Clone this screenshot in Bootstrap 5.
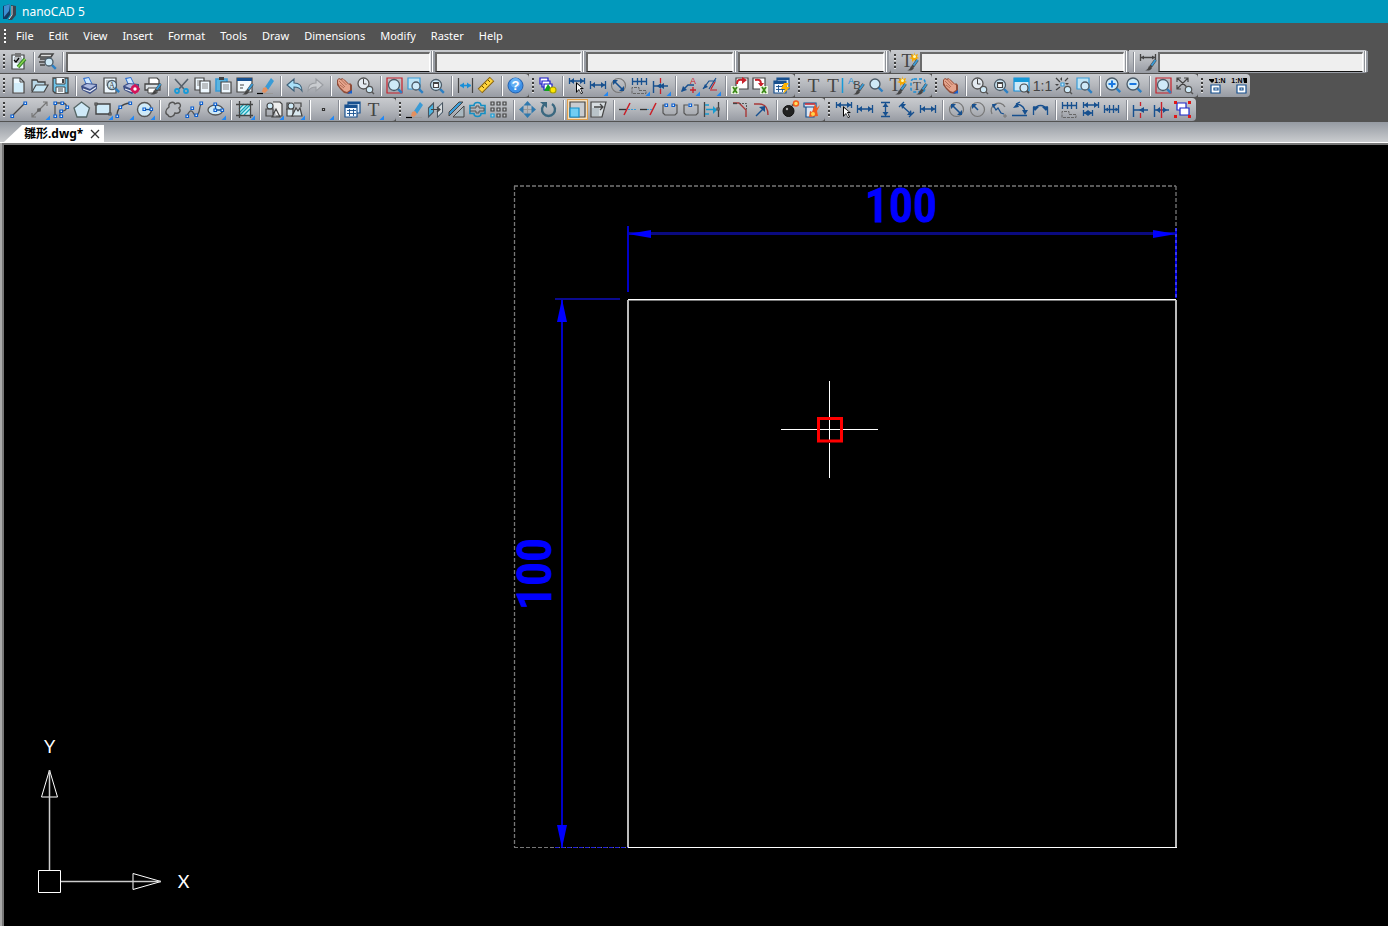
<!DOCTYPE html>
<html lang="en">
<head>
<meta charset="utf-8">
<meta name="viewport" content="width=device-width, initial-scale=1">
<title>nanoCAD 5</title>
<link href="https://cdn.jsdelivr.net/npm/bootstrap@5.3.0/dist/css/bootstrap.min.css" rel="stylesheet">
<style>
body{background:#535353;font-family:"Noto Sans","Noto Sans CJK JP",sans-serif;font-size:12px;line-height:16px}
.titlebar{background:#0099bc;height:23px;color:#fff;padding-left:2px;gap:5px}
.menubar{height:27px;padding:0 0 2px 4px}
.menubar .nav{padding-left:2px}
.menubar .nav-link{color:#fff;font-size:11px;padding:0 7px 0 8px}
.menu-grip{width:2px;height:14px;background:repeating-linear-gradient(#fff 0 2px,transparent 2px 4px)}
.strip{height:24px}
.toolbar{height:23px;padding:1px 3px 1px 0;background:linear-gradient(#c9cbcf,#b4b7bc 50%,#979ba3);border-radius:0 4px 4px 0}
.toolbar.roomy{padding-right:12px}
.toolbar.flush{padding-right:0}
.toolbar.tight{padding-right:2px}
.grip{width:8px;height:21px;flex:none;background:repeating-linear-gradient(#3c3c3c 0 2px,#e4e4e4 2px 3px,transparent 3px 4px) 3px 3px/2px 15px no-repeat}
.divider{width:8px;height:20px;flex:none;background:linear-gradient(#fff,#fff) 5px 0/1px 100% no-repeat,linear-gradient(#888c94,#888c94) 4px 0/1px 100% no-repeat}
.tool{width:21px;height:21px;padding:0;border:0;border-radius:0;flex:none;line-height:0;background:none}
.tool.wide{width:22px}
.tool svg{width:21px;height:21px}
.tool.on{background:#f3dfc0;box-shadow:inset 0 0 0 1px #e0a04c}
.combo{height:20px;min-width:0;padding:0;border:solid;border-width:2px 1px 1px 2px;border-color:#6a6a6a #fff #111 #6a6a6a;border-radius:0;background:#efefef;margin-top:1px}
.combo-lg{flex:366 1 0}
.combo-sm{flex:145 1 0}
.combo-md{flex:206 1 0}
.knob{width:5px;height:21px;flex:none;background:linear-gradient(90deg,#e2e3e5 0 1px,#8f9399 1px 2px,#fff 2px 3px,#999da4 3px)}
.fields{padding-right:20px}
.tabs{height:21px;background:linear-gradient(#959aa2,#cacccf);border-bottom:1px solid #fff}
.doc-tab{margin-left:4px;height:17px;padding:0 4px 0 20px;background:#fff;clip-path:polygon(18px 0,100% 0,100% 100%,0 100%);font-weight:700;font-size:12px;gap:7px}
.doc-tab a{color:#000;text-decoration:none}
.doc-tab button{width:10px;height:10px;padding:0;border:0;background:none;line-height:0}
.model{background:#000;border-top:2px solid #777;border-left:4px solid #999;border-image:linear-gradient(90deg,#aaa 0 2px,#777 2px) 2 0 0 4;min-height:300px}
.ucs{left:0;bottom:0;width:210px;height:200px}
</style>
</head>
<body class="d-flex flex-column min-vh-100">
<header>
  <div class="titlebar d-flex align-items-center">
    <svg width="15" height="18" aria-hidden="true"><path d="M1 3l7-2v11l-3 4H1z" fill="#123b63"/><path d="M2 3l6-2-1 7-5 6z" fill="#3d8fd0"/><path d="M9 2l5 1v9l-4 5H6l3-4z" fill="#39434e"/><path d="M10 3v9l-3 4" stroke="#d4dce2" fill="none"/></svg>
    <span>nanoCAD 5</span>
  </div>
  <div class="menubar d-flex align-items-center">
    <span class="menu-grip"></span>
    <nav class="nav" aria-label="Main menu">
      <a class="nav-link" href="#">File</a><a class="nav-link" href="#">Edit</a><a class="nav-link" href="#">View</a><a class="nav-link" href="#">Insert</a><a class="nav-link" href="#">Format</a><a class="nav-link" href="#">Tools</a><a class="nav-link" href="#">Draw</a><a class="nav-link" href="#">Dimensions</a><a class="nav-link" href="#">Modify</a><a class="nav-link" href="#">Raster</a><a class="nav-link" href="#">Help</a>
    </nav>
  </div>
  <div class="strip fields d-flex" id="fields"></div>
  <div class="strip d-flex" id="standard"></div>
  <div class="strip d-flex" id="drafting"></div>
</header>
<div class="tabs d-flex align-items-end">
  <div class="doc-tab d-flex align-items-center">
    <a href="#">雛形.dwg*</a>
    <button aria-label="Close document"><svg width="10" height="10"><path d="M1 1l8 8M9 1l-8 8" stroke="#333" stroke-width="1.3"/></svg></button>
  </div>
</div>
<main class="model d-flex flex-grow-1 position-relative overflow-hidden">
  <svg class="w-100" role="img" aria-label="Square with dimensions">
    <g transform="translate(-4 -145)">
      <g fill="none" stroke="#777" stroke-dasharray="4 2">
        <path d="M514 186H1176M514.500 186V847M1176 186V299" stroke-width="1.300"/>
        <path d="M514 847.500H628"/>
      </g>
      <g fill="#00f">
        <path d="M628 232h548v3H628z" fill="#0a0a80"/>
        <path d="M627 226h2v66h-2zM561 300h2v547h-2z" fill="#0000c8"/>
        <path d="M555 298h65v2h-65z" fill="#0a0a90"/>
        <path d="M1176 228V298" stroke="#00d" stroke-width="2"/>
        <path d="M1176 228V298" stroke="#77f" stroke-width="1" stroke-dasharray="3 3"/>
        <path d="M555 847.500h73" stroke="#22d" stroke-dasharray="4 2"/>
        <path d="M628 234l23-4v8zM1176 234l-23-4v8zM562 299l-5 23h10zM562 848l-5-23h10z"/>
      </g>
      <g fill="#00f" stroke="#00f" font-family="Roboto Condensed, Roboto, sans-serif" font-size="48" font-weight="500" text-anchor="middle">
        <text x="901" y="222">100</text>
        <text transform="translate(551 574) rotate(-90)">100</text>
      </g>
      <path d="M628 299h548v1H628zM628 847h549v1H628z" fill="#fff"/>
      <path d="M628 300h548v1H628z" fill="#777"/>
      <path d="M627 300h2v547h-2zM1175 300h2v547h-2z" fill="#bbb"/>
      <path d="M781 429.500h36M843 429.500h35M829.500 381v36M829.500 443v35M820 429.500h20M829.500 420v20" stroke="#fff"/>
      <path d="M818.500 418.500h23v22.500h-23z" fill="none" stroke="#f00" stroke-width="3"/>
    </g>
  </svg>
  <svg class="ucs position-absolute" role="img" aria-label="Coordinate axes">
    <g transform="translate(-4 -726)" fill="none" stroke="#fff">
      <path d="M38.500 870.500h22v22h-22zM49.500 770l-8 27h16zM161 881.500l-28-8v16z"/>
      <path d="M49.500 870V770M61 881.500h100" stroke="#ccc" stroke-width="1.500"/>
      <g fill="#fff" stroke="none" font-family="Lato" font-size="18" text-anchor="middle"><text x="49.500" y="753">Y</text><text x="183.500" y="888">X</text></g>
    </g>
  </svg>
</main>
<script src="https://cdn.jsdelivr.net/npm/bootstrap@5.3.0/dist/js/bootstrap.bundle.min.js"></script>
<script>
// Drawing helpers; every icon lives on a 21 x 21 grid.
const K = '#444', B = '#17508f', S = '#3a9bd6', L = '#cfeaf8', D = '#c8202a';
const p = (d, s = K, w = 1.3, f = 'none') => `<path d="${d}" stroke="${s}" stroke-width="${w}" fill="${f}"/>`;
const f = (d, c) => `<path d="${d}" fill="${c}"/>`;
const c = (x, y, r, s = K, w = 1.3, fl = 'none') => `<circle cx="${x}" cy="${y}" r="${r}" stroke="${s}" stroke-width="${w}" fill="${fl}"/>`;
const box = (x, y, w, h, s = K, fl = 'none') => p(`M${x} ${y}h${w}v${h}h-${w}z`, s, 1.2, fl);
const node = (...a) => a.map(([x, y]) => box(x - 1, y - 1, 2.5, 2.5, '#0b5fd0', '#fff')).join('');
const pt = (...a) => a.map(([x, y]) => box(x - 1, y - 1, 2, 2, K, '#ddd')).join('');
const lens = (x, y, r, inner = '') => p(`M${x + r * .7} ${y + r * .7}l4 4`, '#2b7fc4', 2.4) + c(x, y, r, '#4b5a66', 1.3, L) + inner;
const mini = c(14.5, 14.5, 3.2, '#555', 1.2, L) + p('M17 17l2 2', '#555', 1.4);
const brush = f('M8 19c3 0 3-2 4-4l3 2c-2 3-4 3-7 2z', K) + p('M13.500 16l5-7', K, 3) + p('M14.500 14.500l4-5.500', S, 2);
const txt = (t, x, y, s, col = K, ff = 'Liberation Serif', wt = 400) => `<text x="${x}" y="${y}" font-family="${ff}" font-size="${s}" font-weight="${wt}" fill="${col}" text-anchor="middle">${t}</text>`;
const star = f('M15 1l1 3 3-1-1 3 2 1-3 1 1 3-3-2-2 2v-3l-3-1 3-1-1-3 3 1z', '#f5a800') + c(15.5, 5.5, 1.5, 'none', 0, '#fffbb0');
const fly = f('M21 16.500v4.500h-4.500z', '#2288f5');
const ah = (x, y, dx) => f(`M${x} ${y}l${dx * 4}-3v6z`, B);
const dimH = (y, a = 3, b = 18, h = 4) => p(`M${a}.5 ${y - h}v${h * 2}M${b}.5 ${y - h}v${h * 2}M${a} ${y}h${b - a}`, B, 1.3) + ah(a + 1, y, 1) + ah(b, y, -1);
const ladder = p('M3.500 3v7M8.500 3v7M12.500 3v7M17.500 3v7M3 6.500h15', B, 1.3) + `<path d="M3 18.500v-6h7v3h7v3z" fill="none" stroke="#666" stroke-dasharray="3 1"/>`;
const cursor = f('M10 7v11l3-3 2 4 2-1-2-4h3z', '#000') + f('M11 9v7l2-2 2 4h1l-2-5h2z', '#fff');
const page = (x, y, w, h) => box(x, y, w, h, K, '#eef8ff') + p(`M${x + 2} ${y + 3}h${w - 4}M${x + 2} ${y + 5}h${w - 4}M${x + 2} ${y + 7}h${w - 4}`, '#888', 1);
const printer = f('M4 3l6-1 4 8-6 2z', '#2f6fd0') + f('M5.500 4l4-1 3 6-4 2z', '#cfe8ff') + f('M2 11l5-3 11 1v5l-7 5-8-4z', '#3d4f86') + f('M4 11l4-2 9 1-6 4z', '#aebbe0') + p('M4 14l7 2.500 6-4', '#e8eef8', 1.2);
const hand = f('M3 5l2-2 2 1 1-1 3 2 4 4 1-1 2 2v6l-3 3-5-1-4-4-3-4z', '#8f4c38') + f('M4 5l1-1 2 1 2-1 5 5 2 1v5l-3 2-3-1-4-4-2-4z', '#e5a48c') + p('M5 6l6 6M7.500 5l5 5M6 10l4 3', '#a35f4a', .8) + f('M13 18.500l5-3.500v3.500z', '#1560d0');
const clock = c(8.5, 8.500, 5.500, '#555', 1.3, '#e4eaf0') + p('M8.500 4v5h3', K, 1);
const excel = f('M2 11h8v8H2z', '#e8f4dd') + p('M4 12l4 6M8 12l-4 6', '#3c8a18', 1.8);
const eraser = f('M10 12l6-9 3 3-6 9z', S) + f('M8 13l3-1 2 3-3 3-3-1z', '#e29060') + p('M2 18.500h6', '#000', 1.2) + p('M8 18.500h10', '#999', 1);
const redframe = box(3, 3, 15, 15, D);
const tables = box(6, 3, 12, 11, B, '#dbe9f6') + box(3, 6, 12, 12, B, '#f4f9ff') + f('M3 6h12v3H3zM6 3h12v2H6z', B) + p('M5 11.500h9M5 14.500h9M7.500 10v7M11.500 10v7', B, .9);
const block = p('M10 3h7l2 2v12h-6', K, 1.2, '#eee') + c(7, 7, 3, K, 1.1, L) + p('M9 18l4-8 4 8zM3 10h7v7H3z', K, 1.2);

const icons = {
  props: page(4, 4, 12, 14) + f('M7 2h6v4H7z', '#777') + p('M6 9l2 2 3-4', '#000', 1.3) + p('M10 16l7-8', '#36852c', 3.6) + p('M10 16l7-8', '#8cd84c', 1.3),
  quick: p('M4 3h12l-2 3H2zM3 8h11M2 11h7M3 14h5', K, 1.5, '#e0e0e0') + lens(12, 11, 4),
  tstyle: txt('T', 8, 16, 18) + star + brush,
  dstyle: p('M3.500 3v7M18.500 3v7M3 6.500h15', K, 1.3) + f('M4 6.500l3-2v4zM18 6.500l-3-2v4z', K) + brush,
  new: p('M5 3h7l4 4v11H5z', K, 1.2, '#eef9ff') + p('M12 3v4h4', K, 1) + f('M6 8h9v9H6z', '#d2edfa'),
  open: p('M3 16V5h5l1 2h7v3', K, 1.3, '#b9d8e8') + p('M3 17l4-7h12l-4 7z', K, 1.2, '#c8e8f7'),
  save: p('M3 3h15v15H5l-2-2z', K, 1.3, '#6ec3e8') + f('M6 3h9v6H6zM6 12h9v6H6z', '#f4fbff') + p('M6 3v6h9V3M6 18v-6h9v6M8 14h5M8 16h5', K, 1) + f('M12 4h2v4h-2z', K),
  print: printer, preview: page(4, 3, 12, 15) + lens(12, 10, 4.500, txt('A', 12, 13, 8)), plot: printer + c(14, 14, 3, '#d2145a', 2.6, '#fff') + p('M14 9v2M14 17v2M9 14h2M17 14h2M11 11l1 1M17 17l-1-1M17 11l-1 1', '#d2145a', 1.5),
  psetup: p('M7 9V3h8l2 2v4', K, 1.2, '#fff') + p('M3 9h15v6H3z', K, 1.3, '#dbe0e4') + p('M6 13h9v5H6z', K, 1, '#fff') + brush,
  cut: p('M4 4l9 10M17 4L8 14', '#56616b', 1.6) + c(6, 16, 2, '#169ad8', 1.8) + c(15, 16, 2, '#169ad8', 1.8), copy: page(3, 3, 9, 12) + page(8, 6, 10, 12),
  paste: p('M3 4h11v12H3z', S, 1.6, '#5bb4df') + f('M6 2h5v3H6z', K) + page(8, 7, 10, 11), match: box(3, 3, 15, 14, K, '#f3fafe') + f('M3 3h15v3H3z', B) + p('M6 10h4M6 13h3', K, 1) + brush, eraser,
  undo: p('M3 10l7-6v4c6 0 8 3 8 8-2-3-4-4-8-4v4z', '#3f6078', 1.1, '#a9e0f8'), redo: p('M18 10l-7-6v4c-6 0-8 3-8 8 2-3 4-4 8-4v4z', '#9a9da2', 1.1, '#c9ccd0'), hand, clock: clock + mini,
  zext: redframe + lens(10, 10, 5.500), zwin: box(3, 3, 12, 11, S, '#bfe4f5') + lens(11, 11, 4), zobj: lens(10, 10, 5.500, box(7.500, 7.500, 5, 5, K, '#fff') + f('M7 7h6v2H7z', K)),
  dist: p('M3.500 3v15M17.500 3v15', K, 1.2) + p('M5 10.500h11', '#198fd8', 1.6) + f('M5 10.500l4-3v6zM16 10.500l-4-3v6z', '#198fd8'), ruler: p('M4 16L16 4', '#8a6510', 6.500) + p('M4.500 15.500L15.500 4.500', '#ffd43c', 4.500) + p('M6 11l2 2M9 8l2 2M12 5l2 2', '#6a4b00', 1),
  help: c(10.500, 10.500, 7.500, '#2260ad', 1, '#3d91e8') + c(10.500, 8, 5, 'none', 0, '#65b0f4') + txt('?', 10.500, 15, 13, '#fff', 'Liberation Sans', 700),
  layers: box(3, 3, 8, 6, '#1818c8', '#fff') + box(5, 6, 8, 6, '#1818c8', '#fff') + box(7, 9, 8, 6, '#1818c8', '#fff') + f('M7 16l4-7 5 7z', '#11a31d') + c(16, 15, 3, '#a8a000', 1.2, '#ffe800'),
  dimauto: dimH(6, 3, 18, 3) + cursor, dimlin: dimH(10) + fly, dimrad: c(10.500, 10.500, 7, '#777', 1.2) + p('M6 6l9 9', B, 1.6) + f('M5 5h5l-5 5zM16 16h-5l5-5z', B),
  dimord: ladder + fly, dimbrk: p('M3.500 6v12M3 11h15', B, 1.4) + ah(7, 11, 1) + f('M14 8v6l-5-3z', B) + p('M10.500 3v5M10.500 14v5', D, 1.3) + fly,
  lead1: p('M3 16l6-6h6', B, 1.4) + f('M2 17l2-6 4 4z', B) + txt('A', 14, 9, 9, D, 'Liberation Sans') + p('M11 15h6M14 12v6', D, 1.3) + fly, lead2: p('M3 14l6-8h7M9 14l7-11', B, 1.2) + f('M3 14l2-5 3 3z', B) + p('M11 14l4-7M10 15h7', D, 1.2) + fly,
  xlout: box(7, 3, 12, 11, K, '#fff') + p('M8 9c0-4 2-5 6-4', D, 2) + f('M13 2l5 3-5 4z', D) + excel, xlin: box(3, 3, 12, 11, K, '#fff') + p('M5 5c4-1 6 0 6 4', D, 2) + f('M8 8h6l-3 4z', D) + `<g transform="translate(8 0)">${excel}</g>`, tbolt: tables + f('M13 8h5l-3 4h4l-7 7 2-5h-4z', '#ffb400'),
  text: txt('T', 10.500, 17, 19), mtext: txt('T', 9, 17, 19) + p('M18.500 3v15', '#169ad8', 1.5), spell: txt('A', 6, 9, 9, '#168ed8', 'Liberation Sans') + txt('B', 12, 14, 11, K, 'Liberation Sans') + brush, find: lens(9, 9, 5), tfit: `<rect x="3" y="4" width="14" height="13" rx="3" fill="none" stroke="#168ed8" stroke-width="1.400" stroke-dasharray="3 2"/>` + txt('T', 9, 15, 13) + brush,
  zprev: p('M3 3h15v13H3z', '#168ed8', 1.2, '#cdeaf8') + f('M3 3h15v4H3z', '#169ad8') + c(13, 13, 4, K, 1.2, L) + p('M16 16l2 2', K, 2), one: txt('1:1', 10.500, 16, 14, K, 'Liberation Sans'), zctr: p('M3 3l4 4M15 3l-3 3M3 15l4-3', K, 1.2) + f('M9 2v4l-2-2zM2 9h4l-2 2zM16 8h-4l2 2z', K) + box(8, 8, 3, 3, S, L) + mini,
  zin: lens(9, 9, 6, p('M5.500 9h7M9 5.500v7', '#1977e0', 2)), zout: lens(9, 9, 6, p('M5.500 9h7', '#1977e0', 2)), zall: p('M3 3l11 10M14 3L3 14M3 7V3h4M10 3h4v4M3 10v4h4', K, 1.2) + mini,
  vp1: txt('1:N', 13, 8, 7, '#000', 'Liberation Sans', 700) + f('M2 4h5v2l-2 2-3-3z', '#000') + box(4, 10, 9, 8, B, '#fff') + box(7, 13, 4, 2, B), vp2: txt('1:N', 8, 8, 7, '#000', 'Liberation Sans', 700) + f('M14 3h4v5h-3z', '#000') + box(8, 10, 9, 8, B, '#fff') + box(11, 13, 3, 2, B),
  line: p('M4 17L17 4') + node([4, 17], [17, 4]), ray: p('M3 18L18 3M3 14v4h4M14 3h4v4', '#777', 1.2) + pt([10, 11]) + fly, pline: p('M5 17V4h7c6 0 6 8 0 8h-2v5', '#555') + node([5, 4], [5, 17], [12, 4], [11, 12], [17, 8], [11, 17]),
  poly: p('M10.500 3l8 6-3 9H6L3 9z', '#566', 1.3, L), rect: p('M4 5h14v10H4z', K, 1.4, L) + pt([4, 5], [18, 15]) + fly, arc: p('M4 17C4 9 9 5 17 4') + node([4, 17], [7, 8], [17, 4]) + fly, circle: c(10.500, 10.500, 7, '#555', 1.4, L) + p('M10 10.500h7', B) + node([10, 10], [17, 10]) + fly,
  cloud: p('M6 8c-1-5 5-6 6-3 5-3 7 2 4 4 3 4-1 6-4 5-1 4-6 5-7 2-3-1-3-5 1-8z', '#555', 1.4, '#b9bcc1'), spline: p('M3 17c6-14 7 6 11-2 3-4 0-7 4-11', '#555') + node([3, 17], [8, 9], [12, 16], [17, 4]), ellipse: `<ellipse cx="10.500" cy="11" rx="7.500" ry="5" fill="${L}" stroke="#555" stroke-width="1.300"/>` + p('M10.500 5v6h6', B) + node([10, 5], [10, 11], [17, 11]) + fly,
  hatch: f('M5 5h11v11H5z', '#c9f0f8') + p('M5 10l5-5M5 14l9-9M6 16l10-10M10 16l6-6', '#14a4b8', 1.3) + p('M5.500 2v17M16.500 2v17M2 5.500h17M2 16.500h17') + fly, block: block + fly, blk2: p('M3 11V4h3M10 4h7v4', K, 1.2) + box(3, 10, 6, 7, K, '#d9e8ef') + c(7, 7, 3, K, 1.1, L) + p('M8 17l4-8 2 3 2-3 2 8z', K, 1.2, '#d9e8ef') + fly,
  point: box(9.500, 9.500, 2, 2, '#333', '#ddd') + fly, table: tables, textf: txt('T', 10.500, 17, 19) + fly,
  mirror: p('M3.500 9l5-5v9l-5 5zM12.500 9l5-5v9l-5 5z', '#4a5560', 1.1, '#49b4e0') + f('M13 9l4-4v8l-4 4z', '#d8dcdf') + p('M6 10.500h9M12 8l3 2.500-3 2.500', K, 1.2), scal: p('M3 13L13 3h4L3 17z', K, 1, S) + p('M7 18L18 7v11z', K, 1, '#a9b8c0'), offset: p('M3 6.500h4c0-4 7-4 7 0h4v8h-4c0 4-7 4-7 0H3z', '#148fc4', 1.6) + p('M3 9h6V7h3v2h5v3h-5v2H9v-2H3', '#555', 1),
  array: [4, 10, 16].map(y => [4, 10, 16].map(x => box(x - 1, y - 1, 3, 3, y == 16 && x == 4 ? '#12a0dc' : K, '#c8ccd0')).join('')).join(''),
  move: p('M10.500 5v11M5 10.500h11', '#999', 1) + f('M10.500 2l4 4.500h-8zM10.500 19l4-4.500h-8zM2 10.500l4.500-4v8zM19 10.500l-4.500-4v8z', '#2f79ae'), rotate: p('M7 5a6.500 6.500 0 1 0 7 0', '#3b6880', 2.4) + f('M2 3h7v6z', '#3b6880'),
  scale: p('M3 3h15v15H3z', K, 1.2, '#c9ccd0') + box(3, 9, 9, 9, '#138fca', '#72cdf2'), stretch: p('M3 3h15l-4 15H3z', K, 1.2, '#d7dde1') + f('M4 9h7v8H4z', '#b9c3c9') + p('M6 8h9M12 5l3 3-3 3'),
  trim: p('M2 10.500h7', '#333') + p('M7 16l6-12', D, 1.5) + `<path d="M11 10.500h8" stroke="${S}" stroke-dasharray="2 1"/>`, extend: p('M2 10.500h7', '#333') + p('M12 16l6-12', D, 1.5) + `<path d="M9 10.500h6" stroke="${S}" stroke-dasharray="2 1"/>`,
  brk1: p('M6 6H4v8l2 2h10l2-2V6h-2', '#555', 1.2) + node([7, 6], [14, 6]), brk2: p('M8 6H4v8l2 2h10l2-2V6h-4', '#555', 1.2) + node([10, 6]), join: p('M3.500 3v15M17.500 3v15', K) + p('M4 6h4M4 15h4M5 10.500h10', '#189bd0', 1.5) + f('M12 7l4 4-4 4z', '#189bd0') + pt([17, 10]),
  chamf: p('M3 4h6l7 7v7', '#a83838', 1.4) + `<path d="M9 4.500h7.500v6" fill="none" stroke="#555" stroke-dasharray="2 1"/>` + p('M3 4.500h4', K), fillet: p('M3 5h5c6 0 9 4 9 11', '#a83838', 1.4) + p('M5 17l7-7', B, 1.4) + f('M14 7v6l-6-5z', B),
  bomb: c(8.500, 12, 5.500, '#111', 1, '#222') + c(7, 10, 1.200, 'none', 0, '#aaa') + p('M12 7l3-3', '#555', 2) + c(16, 4.500, 2.500, '#f35d20', 1.4, '#ffe060'), purge: p('M3 4h12v4H3zM5 8v10h8V8', B, 1.2, '#dce4f0') + p('M4 5h10', D, 1.500) + f('M8 18l1-6 2 1 3-8 2 4 3-3-3 6 1 5z', '#f25a1c') + c(12, 15, 2, 'none', 0, '#ffd24c'),
  dimv: p('M6 3.500h9M6 17.500h9M10.500 4v13', B) + f('M10.500 4l3 4h-6zM10.500 17l3-4h-6z', B), dima: p('M3 8l5-5M13 18l5-5M5 6l10 9', B) + f('M5 5h5l-4 5zM16 16h-5l4-5z', B), dlin: dimH(10),
  rad: c(10.500, 10.500, 7, '#777', 1.2) + p('M6 6l5 5', B, 1.6) + f('M5 5h5l-5 5z', B), jog: p('M4 15A7 7 0 0 1 17 8', '#777') + p('M5 6l3 5 2-2 3 5 3 1', B) + f('M4 5h5l-4 4z', B) + p('M15 17h4M17 15v4', '#777', 1), ang: p('M3 16.500h15M7 5l4-2', B) + p('M8 5c6 1 8 4 8 9', B, 1.4) + f('M13 11h6l-3 5zM4 9l4-5 2 4z', B), alen: p('M3.500 8v8M17.500 8v8M4 11c3-6 10-6 13 0', B) + f('M3 7l6 1-4 4zM18 7l-6 1 4 4z', B),
  dord: ladder, base: dimH(6, 3, 18, 3) + dimH(14, 3, 12, 3), cont: p('M3.500 6v8M8.500 6v8M12.500 6v8M17.500 6v8M3 10.500h15', B, 1.3) + f('M4 10.500l3-2v4zM17.500 10.500l-3-2v4z', B),
  space: p('M3.500 6v12M3 11h15', B, 1.4) + f('M14 8v6l-5-3z', B) + p('M10.500 3v4M10.500 14v5', D, 1.3), cbrk: p('M3.500 6v12M3 11h15', B, 1.4) + f('M9 8v6l-4-3zM12 8v6l4-3z', B) + p('M10.500 3v16', D, 1.4),
  group: box(5, 4, 9, 7, '#1d28c8', '#fff') + box(8, 9, 9, 7, '#1d28c8', '#fff') + f('M2 2h3v3H2zM16 2h3v3h-3zM2 16h3v3H2zM16 16h3v3h-3z', '#e01818')
};

const strips = {
  fields: ['props | quick | *lg:Layer ^ *sm:Color ^ *sm:Linetype ^ *sm:Lineweight ^', 'tstyle *md:TextStyle ^', '!dstyle *md:DimensionStyle ^'],
  standard: ['new open save | print preview plot psetup | cut copy paste match eraser | undo redo | hand clock | zext zwin zobj | dist ruler | help', 'layers | dimauto dimlin dimrad dimord dimbrk | lead1 lead2 | xlout xlin tbolt', 'text mtext spell find tstyle tfit', 'hand | clock zobj zprev one zctr zwin | zin zout | zext zall', 'vp1 vp2'],
  drafting: ['line ray pline poly rect arc circle | cloud spline ellipse | hatch | block blk2 | point | table textf', 'eraser mirror scal offset array | move rotate | scale stretch | trim extend brk1 brk2 join | chamf fillet | bomb purge', 'dimauto dlin dimv dima dlin | dimrad rad jog ang alen | dord base cont | space cbrk group']
};
const fieldShares = [890, 239, 239];
const part = t => {
  if (t === '|') return '<span class="divider"></span>';
  if (t === '^') return '<span class="knob"></span>';
  if (t[0] === '*') { const [size, name] = t.slice(1).split(':'); return `<select class="form-select combo combo-${size}" aria-label="${name}"><option></option></select>`; }
  return `<button type="button" class="btn tool${t === 'scale' ? ' on' : ''}${/^vp/.test(t) ? ' wide' : ''}" aria-label="${t}"><svg viewBox="0 0 21 21" aria-hidden="true">${icons[t]}</svg></button>`;
};
for (const [id, bars] of Object.entries(strips)) {
  document.getElementById(id).innerHTML = bars.map((b, i) => {
    const plain = b[0] === '!', tokens = b.replace('!', '').split(' '), fields = id === 'fields';
    const pad = fields ? (i === 0 ? ' tight' : ' flush') : id === 'drafting' && i === 0 ? ' roomy' : b === 'vp1 vp2' ? ' flush' : '';
    return `<div class="toolbar d-flex align-items-center${pad}" role="toolbar"${fields ? ` style="flex:${fieldShares[i]} 1 0"` : ''}>${plain ? part('|') : '<span class="grip"></span>'}${tokens.map(part).join('')}</div>`;
  }).join('');
}
</script>
</body>
</html>
